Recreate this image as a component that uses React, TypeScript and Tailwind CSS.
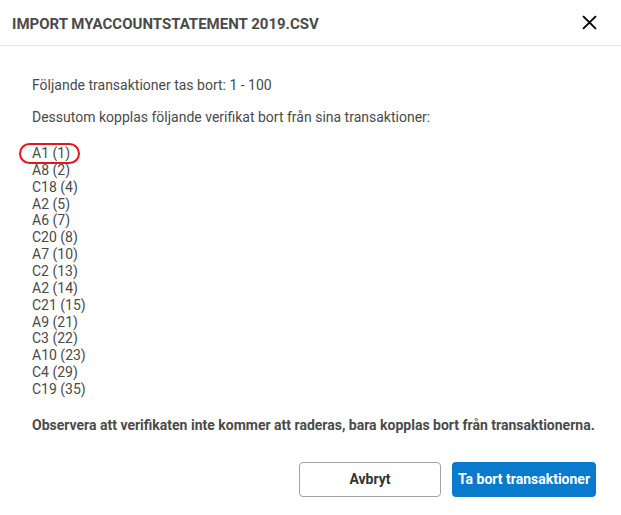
import React from 'react';

const items = [
  'A1 (1)',
  'A8 (2)',
  'C18 (4)',
  'A2 (5)',
  'A6 (7)',
  'C20 (8)',
  'A7 (10)',
  'C2 (13)',
  'A2 (14)',
  'C21 (15)',
  'A9 (21)',
  'C3 (22)',
  'A10 (23)',
  'C4 (29)',
  'C19 (35)',
];

const App: React.FC = () => {
  return (
    <div className="w-[621px] h-[515px] bg-white font-['Roboto',sans-serif] text-[#4a4a4a]">
      {/* Header */}
      <div className="flex items-center justify-between h-[46px] pl-3 pr-6 border-b border-[#e6e6e6]">
        <h1 className="mt-[3px] text-[15px] font-bold uppercase text-[#4a4a4a]">Import myaccountstatement 2019.csv</h1>
        <button type="button" className="text-black" aria-label="Stäng">
          <svg className="h-[15px] w-[15px]" viewBox="0 0 14 14" fill="none" stroke="currentColor">
            <path strokeWidth={1.8} d="M1 1l12 12M13 1L1 13" />
          </svg>
        </button>
      </div>

      {/* Body */}
      <div className="px-8 pt-[31px] text-[14px]">
        <p className="leading-[17px]">Följande transaktioner tas bort: 1 - 100</p>
        <p className="mt-[15px] leading-[17px]">Dessutom kopplas följande verifikat bort från sina transaktioner:</p>

        <ul className="mt-[19px] leading-[16.86px]">
          {items.map((item, i) => (
            <li key={i} className="relative">
              {i === 0 && (
                <span className="absolute left-[-13px] top-[-2px] w-[61px] h-[21px] rounded-full border-2 border-[#e3161e]" />
              )}
              {item}
            </li>
          ))}
        </ul>

        <p className="mt-[19px] -mr-6 whitespace-nowrap font-bold leading-[17px]">
          Observera att verifikaten inte kommer att raderas, bara kopplas bort från transaktionerna.
        </p>

        <div className="flex justify-end gap-[11px] mt-[28px] -mr-[7px]">
          <button
            type="button"
            className="w-[142px] h-[35px] rounded-[4px] border border-[#a3a3a3] bg-white font-bold text-[#333]"
          >
            Avbryt
          </button>
          <button
            type="button"
            className="w-[144px] h-[35px] rounded-[4px] bg-[#0a7bcc] font-bold text-white"
          >
            Ta bort transaktioner
          </button>
        </div>
      </div>
    </div>
  );
};

export default App;
